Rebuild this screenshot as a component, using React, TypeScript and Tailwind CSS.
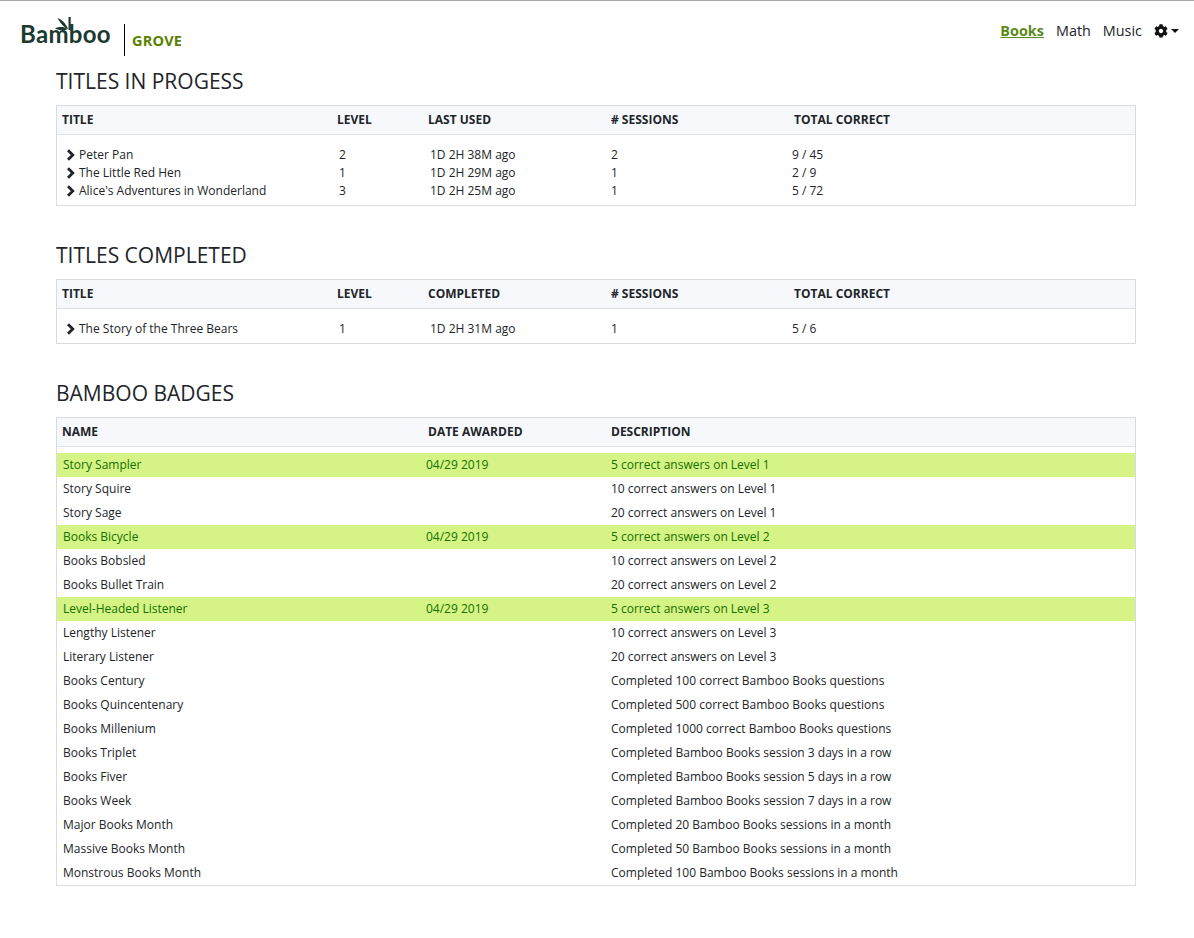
import { FaCog } from "react-icons/fa";

const progress = [
  ["Peter Pan", "2", "1D 2H 38M ago", "2", "9 / 45"],
  ["The Little Red Hen", "1", "1D 2H 29M ago", "1", "2 / 9"],
  ["Alice's Adventures in Wonderland", "3", "1D 2H 25M ago", "1", "5 / 72"],
];

const completed = [["The Story of the Three Bears", "1", "1D 2H 31M ago", "1", "5 / 6"]];

const badges = [
  ["Story Sampler", "04/29 2019", "5 correct answers on Level 1"],
  ["Story Squire", "", "10 correct answers on Level 1"],
  ["Story Sage", "", "20 correct answers on Level 1"],
  ["Books Bicycle", "04/29 2019", "5 correct answers on Level 2"],
  ["Books Bobsled", "", "10 correct answers on Level 2"],
  ["Books Bullet Train", "", "20 correct answers on Level 2"],
  ["Level-Headed Listener", "04/29 2019", "5 correct answers on Level 3"],
  ["Lengthy Listener", "", "10 correct answers on Level 3"],
  ["Literary Listener", "", "20 correct answers on Level 3"],
  ["Books Century", "", "Completed 100 correct Bamboo Books questions"],
  ["Books Quincentenary", "", "Completed 500 correct Bamboo Books questions"],
  ["Books Millenium", "", "Completed 1000 correct Bamboo Books questions"],
  ["Books Triplet", "", "Completed Bamboo Books session 3 days in a row"],
  ["Books Fiver", "", "Completed Bamboo Books session 5 days in a row"],
  ["Books Week", "", "Completed Bamboo Books session 7 days in a row"],
  ["Major Books Month", "", "Completed 20 Bamboo Books sessions in a month"],
  ["Massive Books Month", "", "Completed 50 Bamboo Books sessions in a month"],
  ["Monstrous Books Month", "", "Completed 100 Bamboo Books sessions in a month"],
];

const Logo = () => (
  <div className="flex items-start">
    <div className="relative mt-[14px] w-[90px] font-['Lato'] text-[24px] leading-[38px] font-bold tracking-[0.3px] text-[#1b3a30]">
      Bamboo
      <svg className="absolute left-[34px] top-[2px]" width="20" height="15" viewBox="0 0 20 15">
        <path d="M14.500 0h2.200v13h-2.200z" fill="#1b3a30" />
        <path d="M14 12C10 10.500 6 6 3.500 1c4.500 1.500 8.500 5.500 10.500 11zM14 12C10 9.500 5 9.500 1 11.500c4 2 9 2.500 13 .5z" fill="#1b3a30" />
      </svg>
    </div>
    <div className="mt-[23px] ml-[14px] h-[32px] w-px bg-black" />
    <div className="mt-[30px] ml-[7px] text-[14.500px] leading-[20px] font-bold tracking-[0.2px] text-[#5b8100]">GROVE</div>
  </div>
);

const Chevron = () => (
  <svg className="mr-[3px]" width="10" height="12" viewBox="0 0 10 12">
    <path d="M2 1.200 6.800 6 2 10.800" fill="none" stroke="#212529" strokeWidth="2.800" />
  </svg>
);

const Row5 = ({ row }: { row: string[] }) => (
  <div className="grid grid-cols-[273px_91px_181px_181px_1fr] h-[18px] items-center pl-[9px] text-[12px] leading-[18px] text-[#212529]">
    <div className="flex items-center">
      <Chevron />
      {row[0]}
    </div>
    <div>{row[1]}</div>
    <div>{row[2]}</div>
    <div>{row[3]}</div>
    <div>{row[4]}</div>
  </div>
);

const Head5 = ({ third }: { third: string }) => (
  <div className="grid grid-cols-[275px_91px_183px_183px_1fr] h-[29px] items-center border-b border-[#dee2e6] bg-[#f7f8fc] pl-[5px] text-[12px] font-bold text-[#212529]">
    <div>TITLE</div>
    <div>LEVEL</div>
    <div>{third}</div>
    <div># SESSIONS</div>
    <div>TOTAL CORRECT</div>
  </div>
);

export default function App() {
  return (
    <div className="min-h-[938px] border-t border-[#aaaaaa] bg-white font-['Open_Sans',sans-serif] text-[#212529]">
      <header className="flex h-[67px] items-start justify-between pl-[20px] pr-[15px]">
        <Logo />
        <nav className="mt-[20px] flex items-center gap-[12px] text-[14.400px] leading-[20px]">
          <a className="font-bold text-[#5b8a1c] underline">Books</a>
          <a>Math</a>
          <a>Music</a>
          <span className="flex w-[25px] items-center gap-[3px]">
            <FaCog className="h-[14px] w-[14px] text-[#111]" />
            <span className="h-0 w-0 border-x-[4px] border-t-[4px] border-x-transparent border-t-[#111]" />
          </span>
        </nav>
      </header>

      <main className="mx-[56px] w-[1080px]">
        <h2 className="h-[37px] text-[21px] leading-[26px] text-[#212529]">TITLES IN PROGESS</h2>
        <section className="border border-[#d8dbe0]">
          <Head5 third="LAST USED" />
          <div className="pt-[11px] pb-[5px]">
            {progress.map((row) => (
              <Row5 key={row[0]} row={row} />
            ))}
          </div>
        </section>

        <h2 className="mt-[36px] h-[37px] text-[21px] leading-[26px] text-[#212529]">TITLES COMPLETED</h2>
        <section className="border border-[#d8dbe0]">
          <Head5 third="COMPLETED" />
          <div className="pt-[11px] pb-[5px]">
            {completed.map((row) => (
              <Row5 key={row[0]} row={row} />
            ))}
          </div>
        </section>

        <h2 className="mt-[36px] h-[37px] text-[21px] leading-[26px] text-[#212529]">BAMBOO BADGES</h2>
        <section className="border border-[#d8dbe0]">
          <div className="grid grid-cols-[366px_183px_1fr] h-[29px] items-center border-b border-[#dee2e6] bg-[#f7f8fc] pl-[5px] text-[12px] font-bold">
            <div>NAME</div>
            <div>DATE AWARDED</div>
            <div>DESCRIPTION</div>
          </div>
          <div className="pt-[6px]">
            {badges.map((b) =>
              b[1] ? (
                <div key={b[0]} className="grid grid-cols-[363px_185px_1fr] h-[24px] items-center bg-[#d6f485] pl-[6px] text-[12px] text-[#137000]">
                  <div>{b[0]}</div>
                  <div>{b[1]}</div>
                  <div>{b[2]}</div>
                </div>
              ) : (
                <div key={b[0]} className="grid grid-cols-[363px_185px_1fr] h-[24px] items-center pl-[6px] text-[12px] text-[#212529]">
                  <div>{b[0]}</div>
                  <div>{b[1]}</div>
                  <div>{b[2]}</div>
                </div>
              ),
            )}
          </div>
        </section>
      </main>
    </div>
  );
}
